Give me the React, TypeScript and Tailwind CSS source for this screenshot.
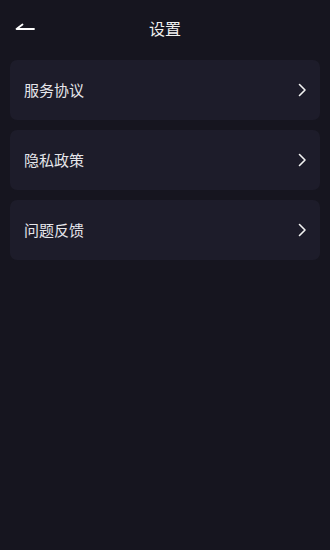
import React from 'react';

const items = ['服务协议', '隐私政策', '问题反馈'];

function Chevron() {
  return (
    <svg width="9" height="14" viewBox="0 0 9 14" fill="none" className="shrink-0">
      <path d="M1.5 1.5 L7 7 L1.5 12.5" stroke="#f2f2f2" strokeWidth="1.6" strokeLinecap="round" strokeLinejoin="round" />
    </svg>
  );
}

export default function App() {
  return (
    <div
      className="w-[330px] h-[550px] bg-[#16151f] text-white"
      style={{ fontFamily: '"Noto Sans CJK SC", "Noto Sans", sans-serif' }}
    >
      {/* 顶部导航 */}
      <div className="relative h-[56px] flex items-center justify-center">
        <button className="absolute left-[14px] top-[20px] p-0">
          <svg width="22" height="14" viewBox="0 0 22 14" fill="none">
            <path d="M8.5 4.5 L2.5 9 L20 9" stroke="#ffffff" strokeWidth="1.8" strokeLinecap="round" strokeLinejoin="round" />
          </svg>
        </button>
        <h1 className="text-[16px] text-[#f0f0f0] leading-none">设置</h1>
      </div>

      {/* 列表 */}
      <div className="px-[10px] pt-[4px] flex flex-col gap-[10px]">
        {items.map((t) => (
          <div
            key={t}
            className="h-[60px] rounded-[7px] bg-[#1d1c2a] pl-[14px] pr-[13px] flex items-center justify-between"
          >
            <span className="text-[15px] text-[#e6e6ea]">{t}</span>
            <Chevron />
          </div>
        ))}
      </div>
    </div>
  );
}
